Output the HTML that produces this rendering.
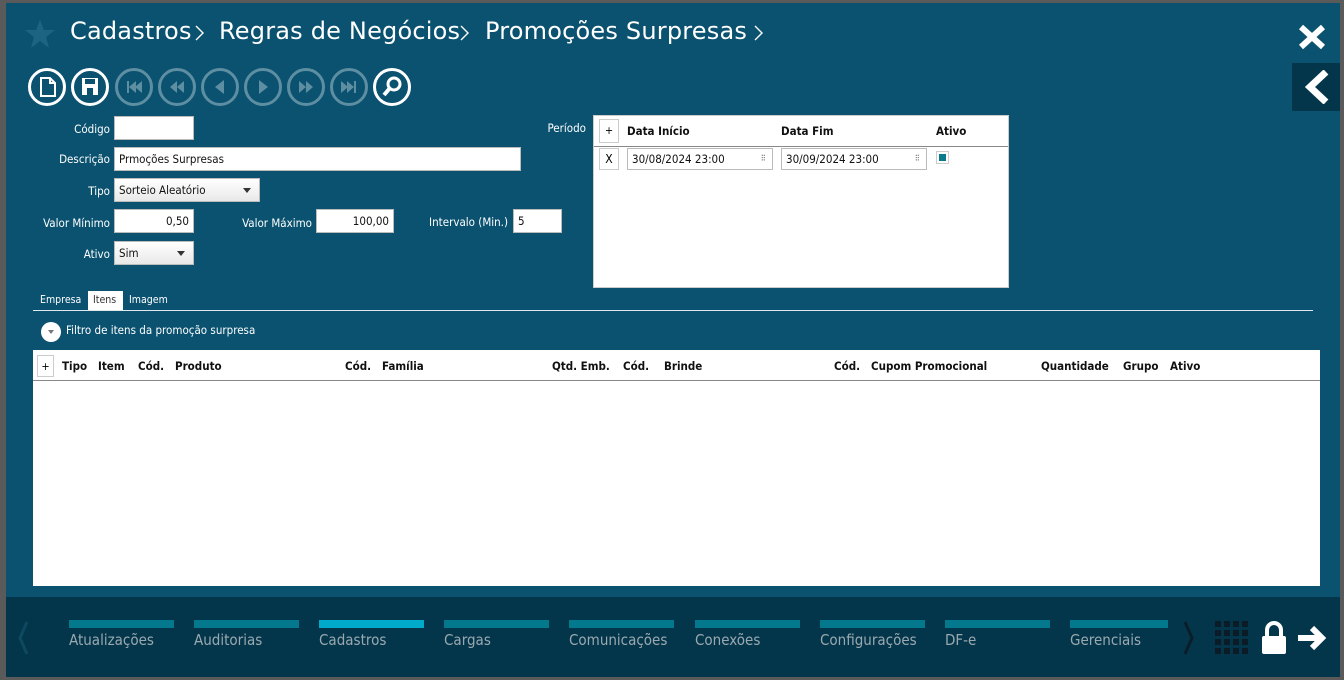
<!DOCTYPE html>
<html><head><meta charset="utf-8"><style>
*{box-sizing:border-box;margin:0;padding:0}
body{width:1344px;height:680px;background:#5a5a5a;font-family:"DejaVu Sans Condensed","Liberation Sans",sans-serif;overflow:hidden;position:relative}
#main{position:absolute;left:6px;top:3px;width:1334px;height:594px;background:#0a5270}
#bot{position:absolute;left:6px;top:597px;width:1334px;height:80px;background:#04364b}
.a{position:absolute}
.t{position:absolute;top:17px;color:#fff;font-size:24px;font-family:"DejaVu Sans","Liberation Sans",sans-serif;white-space:nowrap}
.lbl{position:absolute;color:#fff;font-size:11.5px;text-align:right}
.inp{position:absolute;background:#fff;border:1px solid #bbb;font-size:11.5px;color:#111;padding:2px 4px;height:24px;line-height:18px}
.sel{background:linear-gradient(#fff,#e8e8e8)}
.sel:after{content:"";position:absolute;right:8px;top:9px;border:4px solid transparent;border-top:5px solid #333}
.btn{position:absolute;top:68px;width:38px;height:38px;border-radius:50%;border:3px solid #fff}
.dis{border-color:#5e8ea2}
.hd{font-weight:bold;font-size:11.5px;color:#111;position:absolute}
.nav{position:absolute;top:620px;color:#9aa9b0;font-size:15px;font-family:"DejaVu Sans Condensed","Liberation Sans",sans-serif;line-height:17px}
.nav i{display:block;height:8px;background:#04788c;width:105px;margin-bottom:4px}
</style></head><body>
<div id="main"></div><div id="bot"></div>
<svg class="a" style="left:24px;top:18px" width="32" height="32" viewBox="0 0 32 32"><path d="M16 2l4 10h11l-9 7 3 11-9-7-9 7 3-11-9-7h11z" fill="#1d6483"/></svg>
<div class="t" style="left:70px;width:122px;letter-spacing:0.2px">Cadastros</div>
<div class="t" style="left:219px;letter-spacing:0.2px">Regras de Negócios</div>
<div class="t" style="left:485px;letter-spacing:0.2px">Promoções Surpresas</div>
<svg class="a" style="left:0;top:0" width="780" height="60"><g stroke="#fff" stroke-width="1.4" fill="none"><path d="M196 26l7 7-7 7"/><path d="M461 26l7 7-7 7"/><path d="M755 26l7 7-7 7"/></g></svg>
<svg class="a" style="left:1298px;top:24px" width="28" height="26"><path d="M3 3L25 23M25 3L3 23" stroke="#fff" stroke-width="6"/></svg>
<div class="a" style="left:1292px;top:63px;width:48px;height:48px;background:#04364b"></div>
<svg class="a" style="left:1302px;top:70px" width="30" height="34"><path d="M24 2L8 17l16 15" stroke="#fff" stroke-width="7" fill="none"/></svg>

<div class="btn" style="left:28px"><svg width="32" height="32" style="position:absolute;left:0;top:0"><path d="M10 7h9l5 5v13H10z M19 7v5h5" stroke="#fff" stroke-width="2" fill="none"/></svg></div>
<div class="btn" style="left:71px"><svg width="32" height="32" style="position:absolute;left:0;top:0"><rect x="8" y="7" width="16" height="17" fill="#fff"/><rect x="11" y="8" width="10" height="5" fill="#0a5270"/><rect x="13" y="17" width="6" height="7" fill="#0a5270"/></svg></div>
<div class="btn dis" style="left:115px"><svg width="32" height="32" style="position:absolute;left:0;top:0"><path d="M9 10h2v12H9zM18 10l-7 6 7 6zM24 10l-7 6 7 6z" fill="#5e8ea2"/></svg></div>
<div class="btn dis" style="left:158px"><svg width="32" height="32" style="position:absolute;left:0;top:0"><path d="M16 10l-7 6 7 6zM23 10l-7 6 7 6z" fill="#5e8ea2"/></svg></div>
<div class="btn dis" style="left:201px"><svg width="32" height="32" style="position:absolute;left:0;top:0"><path d="M20 9l-9 7 9 7z" fill="#5e8ea2"/></svg></div>
<div class="btn dis" style="left:244px"><svg width="32" height="32" style="position:absolute;left:0;top:0"><path d="M12 9l9 7-9 7z" fill="#5e8ea2"/></svg></div>
<div class="btn dis" style="left:287px"><svg width="32" height="32" style="position:absolute;left:0;top:0"><path d="M9 10l7 6-7 6zM16 10l7 6-7 6z" fill="#5e8ea2"/></svg></div>
<div class="btn dis" style="left:330px"><svg width="32" height="32" style="position:absolute;left:0;top:0"><path d="M8 10l7 6-7 6zM14 10l7 6-7 6zM21 10h2v12h-2z" fill="#5e8ea2"/></svg></div>
<div class="btn" style="left:373px"><svg width="32" height="32" style="position:absolute;left:0;top:0"><circle cx="18" cy="13" r="6" stroke="#fff" stroke-width="3" fill="none"/><path d="M14 17l-6 7" stroke="#fff" stroke-width="4"/></svg></div>

<div class="lbl" style="left:40px;width:70px;top:122px">Código</div>
<div class="inp" style="left:114px;top:116px;width:80px"></div>
<div class="lbl" style="left:30px;width:80px;top:152px">Descrição</div>
<div class="inp" style="left:114px;top:147px;width:407px">Prmoções Surpresas</div>
<div class="lbl" style="left:40px;width:70px;top:184px">Tipo</div>
<div class="inp sel" style="left:114px;top:178px;width:146px">Sorteio Aleatório</div>
<div class="lbl" style="left:20px;width:90px;top:216px">Valor Mínimo</div>
<div class="inp" style="left:114px;top:209px;width:80px;text-align:right">0,50</div>
<div class="lbl" style="left:220px;width:92px;top:216px">Valor Máximo</div>
<div class="inp" style="left:316px;top:209px;width:78px;text-align:right">100,00</div>
<div class="lbl" style="left:400px;width:108px;top:215px">Intervalo (Min.)</div>
<div class="inp" style="left:513px;top:209px;width:49px">5</div>
<div class="lbl" style="left:40px;width:70px;top:247px">Ativo</div>
<div class="inp sel" style="left:114px;top:241px;width:80px">Sim</div>
<div class="lbl" style="left:520px;width:66px;top:121px">Período</div>

<div class="a" style="left:593px;top:115px;width:416px;height:173px;background:#fff;border:1px solid #ccc"></div>
<div class="a" style="left:594px;top:146px;width:414px;height:1px;background:#888"></div>
<div class="a" style="left:599px;top:119px;width:20px;height:24px;border:1px solid #ccc;font-size:11px;text-align:center;line-height:22px">+</div>
<div class="hd" style="left:627px;top:124px">Data Início</div>
<div class="hd" style="left:781px;top:124px">Data Fim</div>
<div class="hd" style="left:936px;top:124px">Ativo</div>
<div class="a" style="left:599px;top:148px;width:20px;height:22px;border:1px solid #ccc;font-size:12px;text-align:center;line-height:20px">X</div>
<div class="inp" style="left:627px;top:148px;width:146px;height:22px;line-height:16px;font-size:11.5px">30/08/2024 23:00<span style="position:absolute;right:6px;color:#777;font-size:8px">⠿</span></div>
<div class="inp" style="left:781px;top:148px;width:146px;height:22px;line-height:16px;font-size:11.5px">30/09/2024 23:00<span style="position:absolute;right:6px;color:#777;font-size:8px">⠿</span></div>
<div class="a" style="left:936px;top:151px;width:13px;height:13px;border:1px solid #ccc;background:#fff"><div style="margin:2px;width:7px;height:7px;background:#0a7b8a"></div></div>

<div class="a" style="left:40px;top:294px;font-size:10.5px;color:#fff">Empresa</div>
<div class="a" style="left:88px;top:291px;width:35px;height:19px;background:#fff;font-size:10.5px;color:#333;padding:3px 0 0 5px">Itens</div>
<div class="a" style="left:129px;top:294px;font-size:10.5px;color:#fff">Imagem</div>
<div class="a" style="left:33px;top:310px;width:1280px;height:1px;background:#dfe8ec"></div>
<div class="a" style="left:41px;top:322px;width:20px;height:20px;border-radius:50%;background:#fff"><div style="margin:8px 0 0 7px;border:3px solid transparent;border-top:4px solid #777;width:0"></div></div>
<div class="a" style="left:66px;top:323px;font-size:11.5px;color:#fff">Filtro de itens da promoção surpresa</div>

<div class="a" style="left:33px;top:350px;width:1287px;height:236px;background:#fff"></div>
<div class="a" style="left:33px;top:380px;width:1287px;height:1px;background:#888"></div>
<div class="a" style="left:37px;top:355px;width:17px;height:22px;border:1px solid #ccc;font-size:11px;text-align:center;line-height:22px">+</div>
<div class="hd" style="left:62px;top:359px">Tipo</div>
<div class="hd" style="left:98px;top:359px">Item</div>
<div class="hd" style="left:138px;top:359px">Cód.</div>
<div class="hd" style="left:175px;top:359px">Produto</div>
<div class="hd" style="left:345px;top:359px">Cód.</div>
<div class="hd" style="left:382px;top:359px">Família</div>
<div class="hd" style="left:552px;top:359px">Qtd. Emb.</div>
<div class="hd" style="left:623px;top:359px">Cód.</div>
<div class="hd" style="left:664px;top:359px">Brinde</div>
<div class="hd" style="left:834px;top:359px">Cód.</div>
<div class="hd" style="left:871px;top:359px">Cupom Promocional</div>
<div class="hd" style="left:1041px;top:359px">Quantidade</div>
<div class="hd" style="left:1123px;top:359px">Grupo</div>
<div class="hd" style="left:1170px;top:359px">Ativo</div>

<svg class="a" style="left:16px;top:620px" width="14" height="36"><path d="M11 2L4 18l7 16" stroke="#0d4a60" stroke-width="3" fill="none"/></svg>
<div class="nav" style="left:69px"><i></i>Atualizações</div>
<div class="nav" style="left:194px"><i></i>Auditorias</div>
<div class="nav" style="left:319px"><i style="background:#01a9ca"></i>Cadastros</div>
<div class="nav" style="left:444px"><i></i>Cargas</div>
<div class="nav" style="left:569px"><i></i>Comunicações</div>
<div class="nav" style="left:695px"><i></i>Conexões</div>
<div class="nav" style="left:820px"><i></i>Configurações</div>
<div class="nav" style="left:945px"><i></i>DF-e</div>
<div class="nav" style="left:1070px"><i style="width:98px"></i>Gerenciais</div>
<svg class="a" style="left:1182px;top:620px" width="14" height="36"><path d="M3 2l7 16-7 16" stroke="#0a1e2a" stroke-width="3" fill="none"/></svg>
<svg class="a" style="left:1215px;top:621px" width="33" height="33"><g fill="#0c1c26"><rect x="0" y="0" width="6" height="6"/><rect x="9" y="0" width="6" height="6"/><rect x="18" y="0" width="6" height="6"/><rect x="27" y="0" width="6" height="6"/><rect x="0" y="9" width="6" height="6"/><rect x="9" y="9" width="6" height="6"/><rect x="18" y="9" width="6" height="6"/><rect x="27" y="9" width="6" height="6"/><rect x="0" y="18" width="6" height="6"/><rect x="9" y="18" width="6" height="6"/><rect x="18" y="18" width="6" height="6"/><rect x="27" y="18" width="6" height="6"/><rect x="0" y="27" width="6" height="6"/><rect x="9" y="27" width="6" height="6"/><rect x="18" y="27" width="6" height="6"/><rect x="27" y="27" width="6" height="6"/></g></svg>
<svg class="a" style="left:1260px;top:620px" width="28" height="36"><path d="M7 16V10a7 7 0 0114 0v6" stroke="#fff" stroke-width="4" fill="none"/><rect x="2" y="16" width="24" height="18" rx="2" fill="#fff"/></svg>
<svg class="a" style="left:1296px;top:624px" width="34" height="28"><path d="M2 14h24M16 4l10 10-10 10" stroke="#fff" stroke-width="6" fill="none"/></svg>
</body></html>
